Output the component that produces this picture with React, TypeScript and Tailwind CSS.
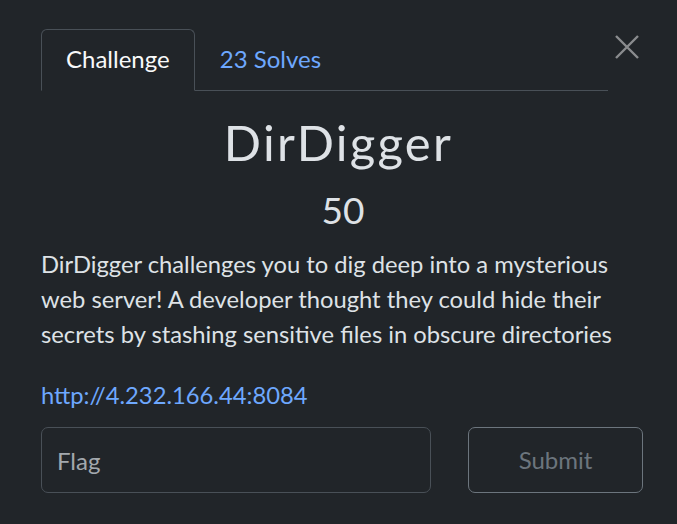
export default function App() {
  return (
    <div className="min-h-screen bg-[#212529] text-[#dee2e6] font-['Lato','Liberation_Sans',sans-serif]">
      <div className="pl-[41px] pr-[34px] pt-[29px]">
        <div className="flex items-start">
          <div className="flex flex-1 border-b border-[#495057]">
            <div className="-mb-px rounded-t-[6px] border border-b-[#212529] border-[#495057] px-[24px] pb-[2px] h-[62px] flex items-center text-[24px] text-[#f8f9fa]">
              Challenge
            </div>
            <div className="px-[25px] pb-[2px] h-[61px] flex items-center text-[24px] text-[#6ea8fe]">23 Solves</div>
          </div>
          <button className="ml-[7px] mt-[6px] mr-[4px] w-[24px] h-[24px] text-[#8a8c8e]">
            <svg viewBox="0 0 24 24" width="24" height="24" fill="none" stroke="currentColor" strokeWidth="2.4">
              <path d="M1 1L23 23M23 1L1 23" />
            </svg>
          </button>
        </div>

        <h3 className="mt-[22px] pr-[7px] text-center text-[49px] font-normal leading-[58px] tracking-[2.3px]">DirDigger</h3>
        <h4 className="mt-[17px] pl-[2px] text-center text-[37px] font-normal leading-[44px]">50</h4>

        <p className="mt-[15px] text-[23.75px] leading-[35px]">
          DirDigger challenges you to dig deep into a mysterious web server! A developer thought they could hide their
          secrets by stashing sensitive files in obscure directories
        </p>

        <p className="mt-[26px] text-[23.75px] leading-[35px]">
          <a className="text-[#6ea8fe]" href="#">http://4.232.166.44:8084</a>
        </p>

        <div className="mt-[14px] flex gap-[37px]">
          <input
            className="w-[390px] h-[66px] rounded-[7px] border border-[#495057] bg-transparent px-[15px] text-[24px] text-[#dee2e6] placeholder:text-[#a3a8ad] outline-none"
            placeholder="Flag"
          />
          <button className="flex-1 h-[66px] rounded-[7px] border border-[#6c757d] text-[24px] text-[#6c757d]">
            Submit
          </button>
        </div>
      </div>
    </div>
  );
}
